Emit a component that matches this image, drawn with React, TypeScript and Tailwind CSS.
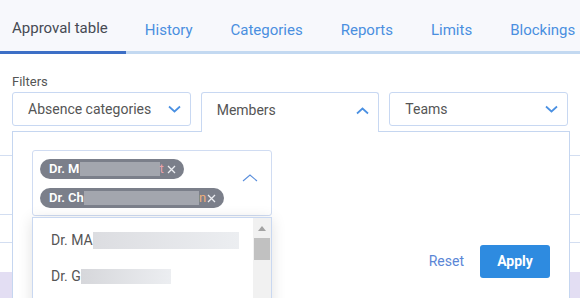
const tabs = ["Approval table", "History", "Categories", "Reports", "Limits", "Blockings"];

function ChevronDown() {
  return (
    <svg width="13" height="8" viewBox="0 0 13 8" fill="none">
      <polyline points="1,1.5 6.5,6.5 12,1.5" stroke="#4a90e2" strokeWidth="1.7" />
    </svg>
  );
}

function ChevronUp() {
  return (
    <svg width="13" height="8" viewBox="0 0 13 8" fill="none">
      <polyline points="1,6.5 6.5,1.5 12,6.5" stroke="#4a90e2" strokeWidth="1.7" />
    </svg>
  );
}

function Cross() {
  return (
    <svg width="9" height="9" viewBox="0 0 9 9" fill="none">
      <path d="M1 1 L8 8 M8 1 L1 8" stroke="#eceef2" strokeWidth="1.3" />
    </svg>
  );
}

function Chip({ prefix, blur, tail, tailColor, width }: { prefix: string; blur: number; tail: string; tailColor: string; width: string }) {
  return (
    <div className={`flex h-[20px] items-center rounded-full bg-[#7b7f8a] pl-[9px] pr-[8px] text-[13px] font-semibold text-white ${width}`}>
      <span>{prefix}</span>
      <span className="h-[14px] bg-[#a3a6ae]" style={{ width: blur }} />
      <span className="font-normal" style={{ color: tailColor }}>{tail}</span>
      <span className="ml-auto flex items-center">
        <Cross />
      </span>
    </div>
  );
}

export default function App() {
  return (
    <div className="h-[298px] w-[580px] overflow-hidden bg-white font-['Roboto',sans-serif]">
      <div className="flex h-[54px] items-start border-b-[3px] border-[#c3d9f1] bg-[#f7f8fc]">
        {tabs.map((t, i) => (
          <div
            key={t}
            className={
              i === 0
                ? "flex h-[54px] shrink-0 items-center whitespace-nowrap border-b-[3px] border-[#3d6fc6] pl-3 pr-[18px] pt-[6px] text-[15px] text-[#464a53]"
                : "flex h-[51px] shrink-0 items-center whitespace-nowrap px-[19px] pt-[9px] text-[15px] text-[#4a8fe0]"
            }
          >
            {t}
          </div>
        ))}
      </div>

      <div className="px-3 pt-[20px] text-[13px] leading-4 text-[#555]">Filters</div>

      <div className="mx-3 mt-[2px] grid grid-cols-3 items-start gap-[10px] text-[14px] text-[#555]">
        <div className="flex h-[34px] items-center justify-between rounded-[3px] border border-[#c8d8f2] pl-[15px] pr-[9px]">
          <span>Absence categories</span>
          <ChevronDown />
        </div>
        <div className="relative z-10 flex h-[40px] items-start justify-between rounded-t-[3px] border border-b-0 border-[#c8d8f2] bg-white pl-[15px] pr-[9px] pt-[7px]">
          <span>Members</span>
          <span className="mt-[7px]">
            <ChevronUp />
          </span>
        </div>
        <div className="flex h-[34px] items-center justify-between rounded-[3px] border border-[#c8d8f2] pl-[15px] pr-[9px]">
          <span>Teams</span>
          <ChevronDown />
        </div>
      </div>

      <div className="relative -mt-px">
        {/* table rows behind the filter panel */}
        <div className="pt-[24px]">
          <div className="h-[59px] border-t border-[#d3def1]" />
          <div className="h-[28px] border-t border-[#d3def1]" />
          <div className="h-[30px] border-t border-[#d3def1]" />
          <div className="h-[40px] bg-[#e3def3]" />
        </div>

        <div className="absolute left-3 top-0 flex h-[200px] w-[558px] items-start justify-between border border-[#c5d6f0] bg-white pl-[19px] pr-[19px] pt-[18px]">
          <div className="relative">
            <div className="flex w-[240px] items-start justify-between rounded-[3px] border border-[#d0dcf2] pb-[7px] pl-[7px] pr-[13px] pt-[8px]">
              <div className="flex flex-col gap-[9px]">
                <Chip prefix="Dr. M" blur={80} tail="t" tailColor="#e9a3aa" width="w-[144px]" />
                <Chip prefix="Dr. Ch" blur={115} tail="n" tailColor="#eeb07a" width="w-[184px]" />
              </div>
              <svg className="mt-[15px]" width="16" height="8" viewBox="0 0 16 8" fill="none">
                <polyline points="1,7 8,1 15,7" stroke="#5b8fdc" strokeWidth="1.1" />
              </svg>
            </div>

            <div className="absolute left-0 top-[67px] flex h-[100px] w-[240px] border border-[#c9d8f1] bg-white shadow-[0_2px_14px_rgba(0,0,0,0.12)]">
              <div className="flex-1 pl-[18px] pt-[4px] text-[14px] text-[#555]">
                <div className="flex h-[36px] items-center">
                  <span>Dr. MA</span>
                  <span className="h-[17px] w-[146px] bg-gradient-to-r from-[#dcdde1] to-[#eceef1]" />
                </div>
                <div className="flex h-[36px] items-center">
                  <span>Dr. G</span>
                  <span className="h-[15px] w-[90px] bg-gradient-to-r from-[#d6d7db] to-[#eceef1]" />
                </div>
              </div>
              <div className="flex w-[18px] flex-col items-center bg-[#f1f1f1]">
                <div className="flex h-[20px] items-center">
                  <svg width="8" height="5" viewBox="0 0 8 5">
                    <polygon points="0,5 4,0 8,5" fill="#a3a3a3" />
                  </svg>
                </div>
                <div className="h-[22px] w-[16px] bg-[#c1c1c1]" />
              </div>
            </div>
          </div>

          <div className="mt-[95px] flex items-center gap-4">
            <span className="text-[14px] text-[#5a86d6]">Reset</span>
            <button className="h-[33px] w-[70px] rounded-[3px] bg-[#2e8be0] text-[14px] font-bold text-white">Apply</button>
          </div>
        </div>
      </div>
    </div>
  );
}
